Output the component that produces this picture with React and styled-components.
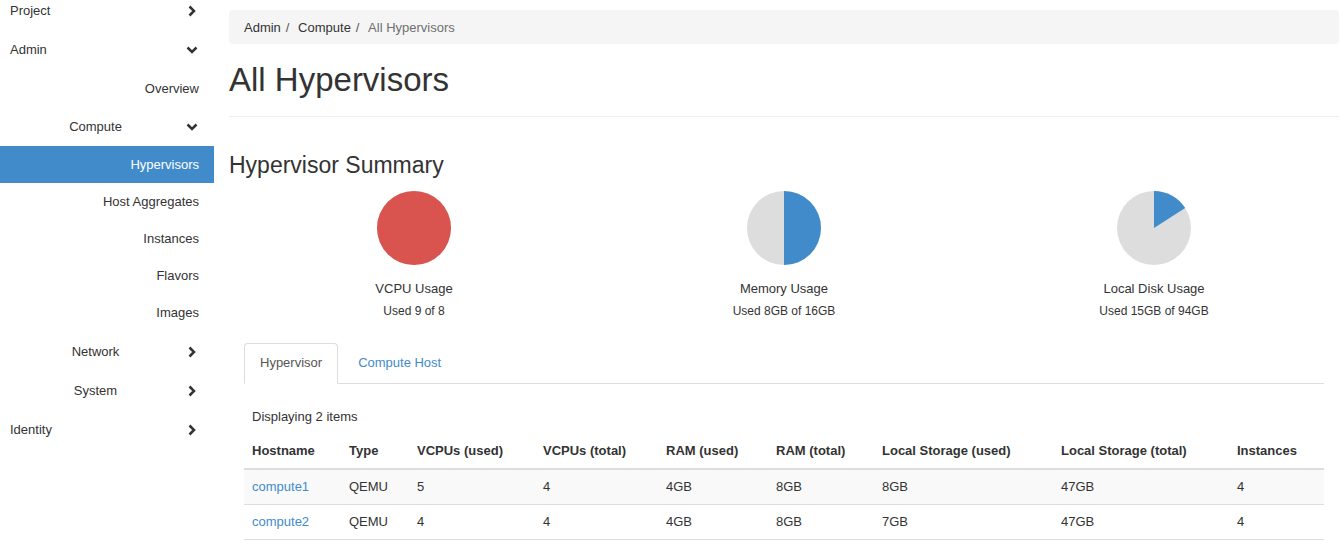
import React from "react";
import styled, { createGlobalStyle } from "styled-components";

const GlobalStyle = createGlobalStyle`
  html, body {
    margin: 0;
    padding: 0;
    background: #fff;
  }
  body {
    font-family: "Liberation Sans", Arial, Helvetica, sans-serif;
    font-size: 13px;
    line-height: 18px;
    color: #333;
    overflow: hidden;
  }
  * {
    box-sizing: border-box;
  }
`;

const navItems = [
  { label: "Project", level: 0, chevron: "right" },
  { label: "Admin", level: 0, chevron: "down" },
  { label: "Overview", level: 2, height: 39 },
  { label: "Compute", level: 1, chevron: "down", height: 38 },
  { label: "Hypervisors", level: 2, active: true },
  { label: "Host Aggregates", level: 2 },
  { label: "Instances", level: 2 },
  { label: "Flavors", level: 2 },
  { label: "Images", level: 2, height: 38 },
  { label: "Network", level: 1, chevron: "right" },
  { label: "System", level: 1, chevron: "right" },
  { label: "Identity", level: 0, chevron: "right" },
];

const usage = [
  { title: "VCPU Usage", text: "Used 9 of 8", used: 9, total: 8 },
  { title: "Memory Usage", text: "Used 8GB of 16GB", used: 8, total: 16 },
  { title: "Local Disk Usage", text: "Used 15GB of 94GB", used: 15, total: 94 },
];

const columns = [
  { label: "Hostname", width: 97 },
  { label: "Type", width: 68 },
  { label: "VCPUs (used)", width: 126 },
  { label: "VCPUs (total)", width: 123 },
  { label: "RAM (used)", width: 110 },
  { label: "RAM (total)", width: 106 },
  { label: "Local Storage (used)", width: 179 },
  { label: "Local Storage (total)", width: 176 },
  { label: "Instances", width: 95 },
];

const hypervisors = [
  ["compute1", "QEMU", "5", "4", "4GB", "8GB", "8GB", "47GB", "4"],
  ["compute2", "QEMU", "4", "4", "4GB", "8GB", "7GB", "47GB", "4"],
];

function Chevron({ dir }) {
  return (
    <ChevronIcon viewBox="0 0 12 12">
      <polyline
        points={dir === "down" ? "1.5,3.5 6,8 10.5,3.5" : "3.5,1.5 8,6 3.5,10.5"}
      />
    </ChevronIcon>
  );
}

function Pie({ used, total }) {
  const r = 37;
  const pct = used / total;
  let slice = null;
  if (pct >= 1) {
    slice = <circle cx={r} cy={r} r={r} fill="#d9534f" />;
  } else if (pct > 0) {
    const a = pct * 2 * Math.PI;
    const x = r + r * Math.sin(a);
    const y = r - r * Math.cos(a);
    const large = pct > 0.5 ? 1 : 0;
    slice = (
      <path
        d={`M${r},${r} L${r},0 A${r},${r} 0 ${large} 1 ${x.toFixed(2)},${y.toFixed(2)} Z`}
        fill="#428bca"
      />
    );
  }
  return (
    <PieSvg viewBox={`0 0 ${r * 2} ${r * 2}`}>
      <circle cx={r} cy={r} r={r} fill="#dddddd" />
      {slice}
    </PieSvg>
  );
}

export default function App() {
  return (
    <>
      <GlobalStyle />
      <Page>
        <Sidebar>
          {navItems.map((item) => (
            <NavItem
              key={item.label}
              $level={item.level}
              $active={item.active}
              $height={item.height || (item.level === 2 ? 37 : 39)}
            >
              <NavLabel $level={item.level}>{item.label}</NavLabel>
              {item.chevron && <Chevron dir={item.chevron} />}
            </NavItem>
          ))}
        </Sidebar>

        <Main>
          <Breadcrumb>
            <Crumb>Admin</Crumb>
            <Separator>/</Separator>
            <Crumb>Compute</Crumb>
            <Separator>/</Separator>
            <Crumb $active>All Hypervisors</Crumb>
          </Breadcrumb>

          <PageHeader>
            <Title>All Hypervisors</Title>
          </PageHeader>

          <SectionTitle>Hypervisor Summary</SectionTitle>

          <Charts>
            {usage.map((u) => (
              <Chart key={u.title}>
                <Pie used={u.used} total={u.total} />
                <ChartTitle>{u.title}</ChartTitle>
                <ChartText>{u.text}</ChartText>
              </Chart>
            ))}
          </Charts>

          <TabArea>
            <Tabs>
              <Tab $active>Hypervisor</Tab>
              <Tab>Compute Host</Tab>
            </Tabs>

            <Caption>Displaying 2 items</Caption>

            <Table>
              <thead>
                <tr>
                  {columns.map((c) => (
                    <Th key={c.label} $width={c.width}>
                      {c.label}
                    </Th>
                  ))}
                </tr>
              </thead>
              <tbody>
                {hypervisors.map((row, i) => (
                  <Row key={row[0]} $striped={i % 2 === 0}>
                    {row.map((cell, j) => (
                      <Td key={j}>
                        {j === 0 ? <HostLink href="#">{cell}</HostLink> : cell}
                      </Td>
                    ))}
                  </Row>
                ))}
              </tbody>
            </Table>
          </TabArea>
        </Main>
      </Page>
    </>
  );
}

const Page = styled.div`
  display: flex;
  width: 1340px;
  min-height: 551px;
`;

const Sidebar = styled.nav`
  width: 214px;
  flex-shrink: 0;
  margin-top: -9px;
`;

const NavItem = styled.div`
  display: flex;
  align-items: center;
  height: ${(p) => p.$height}px;
  padding: 0 ${(p) => (p.$level === 2 ? 15 : 16)}px 0 5px;
  background: ${(p) => (p.$active ? "#428bca" : "transparent")};
  color: ${(p) => (p.$active ? "#fff" : "#333")};
`;

const NavLabel = styled.span`
  flex: 1;
  white-space: nowrap;
  text-align: ${(p) => (p.$level === 0 ? "left" : p.$level === 1 ? "center" : "right")};
  padding-left: ${(p) => (p.$level === 0 ? 5 : 0)}px;
`;

const ChevronIcon = styled.svg`
  width: 12px;
  height: 12px;
  flex-shrink: 0;
  fill: none;
  stroke: #333;
  stroke-width: 2.5;
  stroke-linejoin: miter;
`;

const Main = styled.main`
  flex: 1;
  min-width: 0;
  padding: 10px 1px 0 15px;
`;

const Breadcrumb = styled.div`
  display: flex;
  align-items: center;
  height: 34px;
  padding: 9px 15px 7px;
  background: #f5f5f5;
  border-radius: 4px;
`;

const Crumb = styled.span`
  color: ${(p) => (p.$active ? "#6f6f6f" : "#333")};
`;

const Separator = styled.span`
  color: #555;
  padding: 0 5px;
  &::after {
    content: "\\00a0";
  }
`;

const PageHeader = styled.div`
  padding: 16px 0;
  border-bottom: 1px solid #eee;
`;

const Title = styled.h1`
  margin: 0;
  font-size: 33px;
  line-height: 40px;
  font-weight: 400;
  color: #333;
`;

const SectionTitle = styled.h3`
  margin: 35px 0 0;
  font-size: 23px;
  line-height: 26px;
  font-weight: 400;
  color: #333;
`;

const Charts = styled.div`
  display: grid;
  grid-template-columns: repeat(3, 1fr);
  margin-top: 13px;
`;

const Chart = styled.div`
  display: flex;
  flex-direction: column;
  align-items: center;
`;

const PieSvg = styled.svg`
  width: 74px;
  height: 74px;
  display: block;
`;

const ChartTitle = styled.div`
  margin-top: 15px;
  font-size: 13px;
  line-height: 18px;
`;

const ChartText = styled.div`
  margin-top: 5px;
  font-size: 12px;
  line-height: 16px;
`;

const TabArea = styled.div`
  padding: 0 15px;
  margin-top: 24px;
`;

const Tabs = styled.div`
  display: flex;
  gap: 4px;
  border-bottom: 1px solid #ddd;
`;

const Tab = styled.a`
  display: block;
  margin-bottom: -1px;
  padding: 10px 15px 11px;
  line-height: 18px;
  border: 1px solid ${(p) => (p.$active ? "#ddd" : "transparent")};
  border-bottom-color: ${(p) => (p.$active ? "#fff" : "transparent")};
  border-radius: 4px 4px 0 0;
  background: ${(p) => (p.$active ? "#fff" : "transparent")};
  color: ${(p) => (p.$active ? "#555" : "#428bca")};
  cursor: pointer;
`;

const Caption = styled.div`
  margin-top: 24px;
  padding-left: 8px;
`;

const Table = styled.table`
  width: 100%;
  margin-top: 8px;
  border-collapse: collapse;
  table-layout: fixed;
`;

const Th = styled.th`
  width: ${(p) => p.$width}px;
  padding: 8px;
  text-align: left;
  font-weight: 700;
  white-space: nowrap;
  border-bottom: 2px solid #ddd;
`;

const Row = styled.tr`
  background: ${(p) => (p.$striped ? "#f9f9f9" : "#fff")};
`;

const Td = styled.td`
  padding: 8px;
  border-bottom: 1px solid #ddd;
  white-space: nowrap;
`;

const HostLink = styled.a`
  color: #428bca;
  text-decoration: none;
`;
